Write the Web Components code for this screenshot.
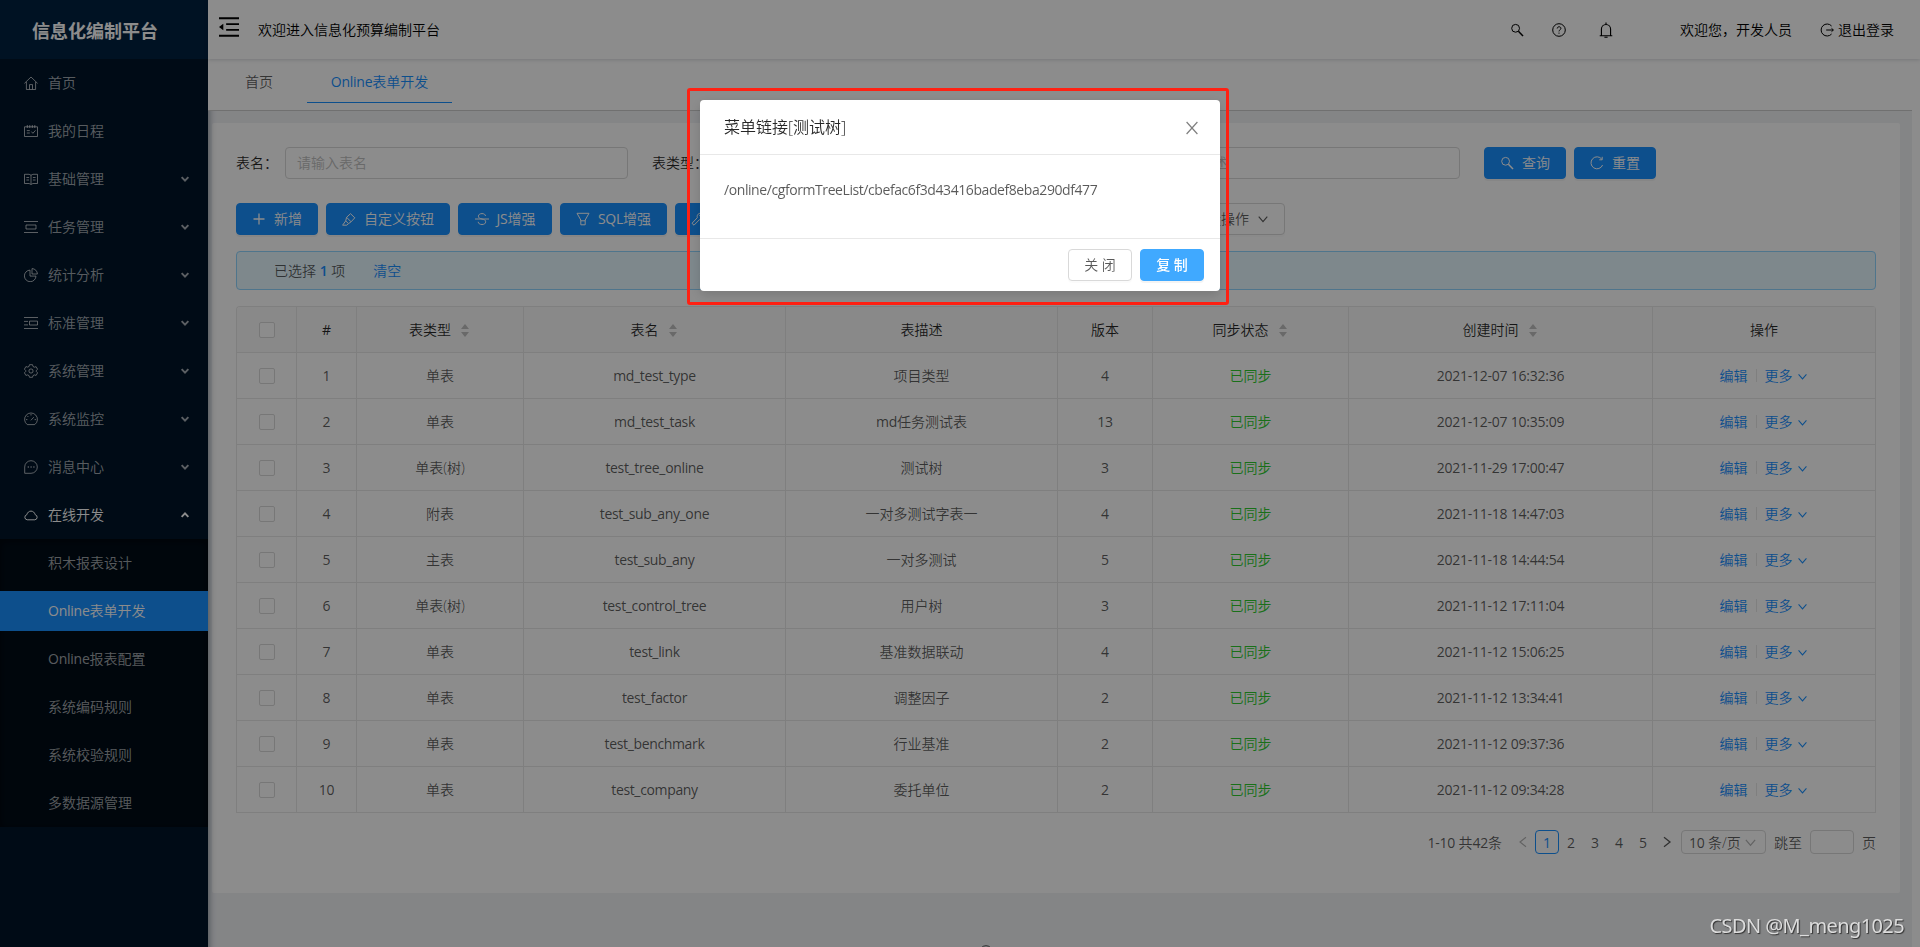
<!DOCTYPE html>
<html lang="zh-CN">
<head>
<meta charset="utf-8">
<title>信息化编制平台</title>
<style>
    html, body {
        margin: 0;
        height: 100%;
        overflow: hidden;
    }

    body {
        font: 350 14px/21px 'Open Sans', 'Noto Sans CJK SC', sans-serif;
        color: rgba(0,0,0,0.65);
        background: white;
    }
</style>
</head>
<body>
<mp-app></mp-app>

<script>
const ICONS = {
    home: '<path d="M.4 7.400 7 1l6.600 6.400M2.400 6v7.500h9.200V6M5.500 13.300V8.600h3v4.700"/>',
    schedule: '<path d="M.5 2.8h13v9.7H.5zM3.3 1v3M5.8 1v3M8.3 1v3M10.8 1v3M2.8 6.6h3M2.8 9h3M7.4 7.6l1.5 1.7 2.6-3"/>',
    read: '<path d="M.5 2.3h4.6L7 3.2l1.9-.9h4.6v9.2H8.9l-1.9 1-1.9-1H.5zM7 3.2v9M2.4 5.5h2.7M2.4 8h2.7M8.9 5.5h2.7M8.9 8h2.7"/>',
    task: '<path d="M0 1.5h14M0 12.5h14M2 5h10v4H2z"/>',
    pie: '<path d="M6 2.1a5.8 5.8 0 1 0 6 6H6zM8 .6V6h5.4A5.5 5.5 0 0 0 8 .6z"/>',
    profile: '<path d="M0 1.5h14M0 12.5h14M0 5.4h4M0 8.9h4M5.5 5.1h8v3.9h-8z"/>',
    setting: '<path d="M5.5.7h3l.5 1.8 1.3.7 1.8-.5 1.5 2.6L12.3 6.500v1l1.300 1.300-1.500 2.600-1.800-.5-1.300.7-.5 1.700h-3L5 11.600l-1.300-.7-1.800.5L.4 8.800 1.700 7.500v-1L.4 5.200l1.500-2.600 1.800.5L5 2.500z"/><circle cx="7" cy="7" r="2.100"/>',
    dashboard: '<path d="M3.300 12.600a6.400 6.400 0 1 1 7.400 0zM6.900 8.300l2.900-3.100M7 2v1.500M2 7.600h1.400M10.600 7.600H12M3.400 4l1 1"/>',
    message: '<path d="M.7 13.300V7a6.300 6.300 0 1 1 6.300 6.300z"/><path d="M3.700 7h1.200M6.500 7h1.200M9.300 7h1.200" stroke-width="1.300"/>',
    cloud: '<path d="M3.200 11.800a2.600 2.600 0 0 1-.4-5.100C3.400 4.500 5 3.100 7 3.100s3.600 1.400 4.200 3.600a2.600 2.600 0 0 1-.4 5.100z"/>',
    search: '<circle cx="5.600" cy="5.300" r="3.900"/><path d="m8.400 8.200 4.600 4.800" stroke-width="1.500"/>',
    question: '<circle cx="7" cy="7" r="6.300"/><path d="M5.200 5.500c0-2.300 3.700-2.300 3.700-.1C8.900 6.900 7 6.700 7 8.400M7 9.600v1.100"/>',
    bell: '<path d="M1.500 12h11M3 12V6.200a4 4 0 0 1 8 0V12M7 .4v1.700M5.600 13.300h2.800"/>',
    logout: '<path d="M11.600 3A6 6 0 1 0 11.600 11M6.200 7h7M11.500 5.300 13.400 7l-1.900 1.700"/>',
    plus: '<path d="M7 1.500v11M1.500 7h11" stroke-width="1.300"/>',
    highlight: '<path d="M.6 13.200h4.200l1.700-1.600-2.800-2.700zM3.700 8.900l.9-3.600L8.500 1.700l4.300 4.100-3.700 4-2.600 1.800M4.600 5.300l4.500 4.500"/>',
    strike: '<path d="M0 7h14M10.500 4c-.2-1.700-1.600-2.400-3.500-2.400-2.200 0-3.600 1-3.600 2.600C3.400 6 5 6.500 7 7c2.200.5 3.700 1 3.700 2.800 0 1.700-1.500 2.700-3.700 2.700-2.300 0-3.700-1-3.800-2.700"/>',
    filter: '<path d="M1 1.300h12L9.200 8v4.800H4.800V8zM4.800 8.800h4.400"/>',
    tool: '<path d="m1 11.300 5.300-5.600c-.7-3 1.500-5 4.500-4.300L8.600 3.700l1.800 1.700 2.300-2.100c.7 2.900-1.400 5-4.300 4.400L3 13.200z"/>',
    reload: '<path d="M11.800 3.200A6 6 0 1 0 12.600 9M12.200.8v3H9.300"/>',
    down: '<path d="m2 4.200 5 5.800 5-5.800" stroke-width="1.300"/>',
    left: '<path d="M10.500 1.500 3.500 7l7 5.500" stroke-width="1.300"/>',
    right: '<path d="m3.500 1.500 7 5.500-7 5.500" stroke-width="1.500"/>',
    close: '<path d="m1.600 1 10.800 12M12.400 1 1.600 13" stroke-width="1.200"/>',
    arrow: '<path d="m2.300 4.300 4.700 5 4.700-5" stroke-width="2.700"/>',
    fold: '<path d="M0 .9h14M5 5h9M5 9h9M0 13.100h14" stroke-width="1.300"/><path d="M0 7l3-2.200v4.400z" fill="currentColor" stroke="none"/>'
};

class Icon extends HTMLElement {
    constructor() {
        super();
        this.attachShadow({mode: 'open'});
        this.shadowRoot.innerHTML = `
            <style>
                :host {
                    display: inline-block;
                    flex: none;
                    width: 14px;
                    height: 14px;
                }

                svg {
                    display: block;
                    width: 100%;
                    height: 100%;
                    fill: none;
                    stroke: currentColor;
                }
            </style>
            <svg viewBox="0 0 14 14">${ICONS[this.getAttribute('name')] || ''}</svg>
        `;
    }
}

// Latin letters and digits are a bit heavier and tighter than the Chinese text
class Latin extends HTMLElement {
    constructor() {
        super();
        this.attachShadow({mode: 'open'});
        // no whitespace around the slot, it would show up inside the text
        this.shadowRoot.innerHTML = `<style>
                :host {
                    display: inline;
                    font-weight: 400;
                    letter-spacing: -0.25px;
                }
            </style><slot></slot>`;
    }
}

function latin(text) {
    return String(text).replace(/[\w][\w\-: ]*/g, '<mp-latin>$&</mp-latin>');
}

class Button extends HTMLElement {
    constructor() {
        super();
        this.attachShadow({mode: 'open'});
        this.shadowRoot.innerHTML = `
            <style>
                :host {
                    display: flex;
                    align-items: center;
                    justify-content: center;
                    gap: 8px;
                    flex: none;
                    box-sizing: border-box;
                    height: 32px;
                    line-height: 20px;
                    border: 1px solid #d9d9d9;
                    border-radius: 4px;
                    background: white;
                    box-shadow: 0 2px 0 rgba(0,0,0,0.015);
                    white-space: nowrap;
                }

                :host([primary]) {
                    color: white;
                    border-color: #1890ff;
                    background: #1890ff;
                    box-shadow: 0 2px 0 rgba(0,0,0,0.045);
                }
            </style>
            <slot></slot>
        `;
    }
}

const MENU = [
    ['home', '首页'], ['schedule', '我的日程'], ['read', '基础管理', 1], ['task', '任务管理', 1],
    ['pie', '统计分析', 1], ['profile', '标准管理', 1], ['setting', '系统管理', 1],
    ['dashboard', '系统监控', 1], ['message', '消息中心', 1], ['cloud', '在线开发', 1]
];
const SUBMENU = ['积木报表设计', 'Online表单开发', 'Online报表配置', '系统编码规则', '系统校验规则', '多数据源管理'];

class Sidebar extends HTMLElement {
    constructor() {
        super();
        this.attachShadow({mode: 'open'});
        this.shadowRoot.innerHTML = `
            <style>
                :host {
                    display: block;
                    background: #001529;
                    box-shadow: 2px 0 6px rgba(0,21,41,0.35);
                    color: rgba(255,255,255,0.65);
                }

                h1 {
                    margin: 0;
                    height: 59px;
                    padding-left: 32px;
                    font-size: 18px;
                    line-height: 63px;
                    color: white;
                    background: #002140;
                    box-sizing: border-box;
                }

                .item {
                    display: flex;
                    align-items: center;
                    height: 40px;
                    line-height: 20px;
                    margin: 4px 0 8px;
                    padding: 0 16px 0 24px;
                }

                .item + .item {
                    margin-top: 0;
                }

                .item span {
                    flex: 1;
                    margin-left: 10px;
                }

                .item mp-icon[name=arrow] {
                    width: 10px;
                    height: 10px;
                    margin-right: 2px;
                }

                .open {
                    color: white;
                    margin-bottom: 4px;
                }

                .open mp-icon[name=arrow] {
                    transform: rotate(180deg);
                }

                .sub {
                    background: #000c17;
                    box-shadow: inset 0 2px 8px rgba(0,0,0,0.45);
                    padding: 4px 0;
                    display: grid;
                    gap: 8px;
                }

                .sub div {
                    height: 40px;
                    line-height: 40px;
                    padding-left: 48px;
                }

                .sub .selected {
                    color: white;
                    background: #1890ff;
                }
            </style>
            <h1>信息化编制平台</h1>
            ${MENU.map(([icon, text, sub]) => `
                <div class="item ${icon === 'cloud' ? 'open' : ''}">
                    <mp-icon name="${icon}"></mp-icon><span>${text}</span>
                    ${sub ? '<mp-icon name="arrow"></mp-icon>' : ''}
                </div>`).join('')}
            <div class="sub">
                ${SUBMENU.map((text, i) => `<div class="${i === 1 ? 'selected' : ''}">${latin(text)}</div>`).join('')}
            </div>
        `;
    }
}

class TopBar extends HTMLElement {
    constructor() {
        super();
        this.attachShadow({mode: 'open'});
        this.shadowRoot.innerHTML = `
            <style>
                :host {
                    display: flex;
                    align-items: center;
                    box-sizing: border-box;
                    height: 59px;
                    padding: 0 26px 0 11px;
                    color: black;
                    background: white;
                    box-shadow: 0 1px 4px rgba(0,21,41,0.16);
                    z-index: 2;
                }

                [name=fold] {
                    width: 20px;
                    height: 20px;
                    margin: -5px 19px 0 0;
                }

                .space {
                    flex: 1;
                }

                [name=bell] {
                    width: 16px;
                    height: 16px;
                    margin: 0 -1px;
                }

                [name=question] { margin: 0 33px 0 28px; }
                [name=logout] { margin: 0 4px 0 28px; }
                .name { margin-left: 67px; }
            </style>
            <mp-icon name="fold"></mp-icon>
            <span>欢迎进入信息化预算编制平台</span>
            <span class="space"></span>
            <mp-icon name="search"></mp-icon>
            <mp-icon name="question"></mp-icon>
            <mp-icon name="bell"></mp-icon>
            <span class="name">欢迎您，开发人员</span>
            <mp-icon name="logout"></mp-icon>
            <span>退出登录</span>
        `;
    }
}

class Tabs extends HTMLElement {
    constructor() {
        super();
        this.attachShadow({mode: 'open'});
        this.shadowRoot.innerHTML = `
            <style>
                :host {
                    display: flex;
                    gap: 10px;
                    box-sizing: border-box;
                    height: 52px;
                    margin-right: 8px;
                    padding-left: 13px;
                    background: white;
                    border-bottom: 1px solid #ccc;
                    z-index: 1;
                }

                div {
                    box-sizing: border-box;
                    width: 76px;
                    height: 44px;
                    line-height: 46px;
                    text-align: center;
                }

                .active {
                    width: 145px;
                    color: #1890ff;
                    border-bottom: 1px solid #1890ff;
                }
            </style>
            <div>首页</div>
            <div class="active">${latin('Online表单开发')}</div>
        `;
    }
}

class SearchForm extends HTMLElement {
    constructor() {
        super();
        this.attachShadow({mode: 'open'});
        this.shadowRoot.innerHTML = `
            <style>
                :host {
                    display: grid;
                    grid-template-columns: 416px 416px 416px 82px 82px;
                    line-height: 20px;
                    color: rgba(0,0,0,0.85);
                }

                .field {
                    display: flex;
                    align-items: center;
                    margin-right: 24px;
                }

                label {
                    margin-right: 7px;
                }

                .input {
                    flex: 1;
                    height: 30px;
                    line-height: 30px;
                    padding: 0 11px;
                    border: 1px solid #d9d9d9;
                    border-radius: 4px;
                    color: #bfbfbf;
                }

                .reset {
                    margin-left: 8px;
                    margin-right: -8px;
                }
            </style>
            <div class="field"><label>表名：</label><div class="input">请输入表名</div></div>
            <div class="field"><label>表类型：</label><div class="input">请选择表类型</div></div>
            <div class="field"><label>表描述：</label><div class="input">请输入表描述</div></div>
            <mp-button primary><mp-icon name="search"></mp-icon>查询</mp-button>
            <mp-button primary class="reset"><mp-icon name="reload"></mp-icon>重置</mp-button>
        `;
    }
}

const COLUMNS = [['表类型', 1], ['表名', 1], ['表描述'], ['版本'], ['同步状态', 1], ['创建时间', 1], ['操作']];
const ROWS = [
    ['单表', 'md_test_type', '项目类型', 4, '2021-12-07 16:32:36'],
    ['单表', 'md_test_task', 'md任务测试表', 13, '2021-12-07 10:35:09'],
    ['单表(树)', 'test_tree_online', '测试树', 3, '2021-11-29 17:00:47'],
    ['附表', 'test_sub_any_one', '一对多测试字表一', 4, '2021-11-18 14:47:03'],
    ['主表', 'test_sub_any', '一对多测试', 5, '2021-11-18 14:44:54'],
    ['单表(树)', 'test_control_tree', '用户树', 3, '2021-11-12 17:11:04'],
    ['单表', 'test_link', '基准数据联动', 4, '2021-11-12 15:06:25'],
    ['单表', 'test_factor', '调整因子', 2, '2021-11-12 13:34:41'],
    ['单表', 'test_benchmark', '行业基准', 2, '2021-11-12 09:37:36'],
    ['单表', 'test_company', '委托单位', 2, '2021-11-12 09:34:28']
];

class Table extends HTMLElement {
    constructor() {
        super();
        this.attachShadow({mode: 'open'});
        this.shadowRoot.innerHTML = `
            <style>
                :host {
                    display: block;
                    border: 1px solid #e8e8e8;
                    border-width: 1px 0 0 1px;
                    border-radius: 4px 4px 0 0;
                    overflow: hidden;
                }

                .row {
                    display: grid;
                    grid-template-columns: 60px 60px 167px 262px 272px 95px 196px 304px 1fr;
                    height: 46px;
                }

                .row > div {
                    display: flex;
                    align-items: center;
                    justify-content: center;
                    border: 1px solid #e8e8e8;
                    border-width: 0 1px 1px 0;
                }

                .head {
                    background: #fafafa;
                    color: rgba(0,0,0,0.85);
                }

                .check {
                    box-sizing: border-box;
                    width: 16px;
                    height: 16px;
                    border: 1px solid #d9d9d9;
                    border-radius: 2px;
                    background: white;
                }

                .sorter {
                    display: grid;
                    gap: 3px;
                    margin: 2px 2px 0 10px;
                }

                .sorter::before,
                .sorter::after {
                    content: '';
                    border: solid transparent;
                    border-width: 0 4px 5px;
                    border-bottom-color: #bfbfbf;
                }

                .sorter::after {
                    transform: rotate(180deg);
                }

                .name mp-latin {
                    letter-spacing: -0.35px;
                }

                .synced {
                    color: #2ecc2e;
                }

                a {
                    color: #1890ff;
                }

                a mp-icon {
                    width: 11px;
                    height: 11px;
                    margin: 0 1px -1px 4px;
                }

                i {
                    width: 1px;
                    height: 13px;
                    margin: 0 8px;
                    background: #e8e8e8;
                }
            </style>
            <div class="row head">
                <div><span class="check"></span></div>
                <div><mp-latin>#</mp-latin></div>
                ${COLUMNS.map(([text, sort]) => `<div>${text}${sort ? '<span class="sorter"></span>' : ''}</div>`).join('')}
            </div>
            ${ROWS.map(([type, name, desc, version, time], i) => `
                <div class="row">
                    <div><span class="check"></span></div>
                    <div>${latin(i + 1)}</div>
                    <div>${type}</div>
                    <div class="name">${latin(name)}</div>
                    <div>${latin(desc)}</div>
                    <div>${latin(version)}</div>
                    <div class="synced">已同步</div>
                    <div>${latin(time)}</div>
                    <div><a>编辑</a><i></i><a>更多<mp-icon name="down"></mp-icon></a></div>
                </div>`).join('')}
        `;
    }
}

class Pagination extends HTMLElement {
    constructor() {
        super();
        this.attachShadow({mode: 'open'});
        this.shadowRoot.innerHTML = `
            <style>
                :host {
                    display: flex;
                    align-items: center;
                    justify-content: flex-end;
                    height: 24px;
                }

                .total {
                    margin-right: 9px;
                }

                .page {
                    display: flex;
                    align-items: center;
                    justify-content: center;
                    box-sizing: border-box;
                    width: 24px;
                    height: 24px;
                }

                .page mp-icon {
                    width: 12px;
                    height: 12px;
                }

                .disabled {
                    color: rgba(0,0,0,0.3);
                }

                .active {
                    color: #1890ff;
                    border: 1px solid #1890ff;
                    border-radius: 4px;
                }

                .size,
                .jump {
                    box-sizing: border-box;
                    height: 24px;
                    border: 1px solid #d9d9d9;
                    border-radius: 4px;
                }

                .size {
                    display: flex;
                    align-items: center;
                    justify-content: space-between;
                    width: 85px;
                    margin: 0 8px 0 2px;
                    padding: 0 8px 0 7px;
                    white-space: nowrap;
                }

                .size mp-icon {
                    width: 13px;
                    height: 13px;
                    color: rgba(0,0,0,0.3);
                }

                .jump {
                    width: 44px;
                    margin: 0 8px;
                }
            </style>
            <span class="total">${latin('1-10 共42条')}</span>
            <span class="page disabled"><mp-icon name="left"></mp-icon></span>
            <span class="page active">${latin(1)}</span>
            ${[2, 3, 4, 5].map(n => `<span class="page">${latin(n)}</span>`).join('')}
            <span class="page"><mp-icon name="right"></mp-icon></span>
            <span class="size"><span>${latin('10 条/页')}</span><mp-icon name="down"></mp-icon></span>
            <span>跳至</span>
            <span class="jump"></span>
            <span>页</span>
        `;
    }
}

class Modal extends HTMLElement {
    constructor() {
        super();
        this.attachShadow({mode: 'open'});
        this.shadowRoot.innerHTML = `
            <style>
                #backdrop {
                    position: fixed;
                    inset: 0;
                    background: rgba(0,0,0,0.45);
                    z-index: 10;
                }

                #modal {
                    position: fixed;
                    top: 100px;
                    left: 700px;
                    width: 520px;
                    height: 191px;
                    display: grid;
                    grid-template-rows: 55px 1fr 53px;
                    background: white;
                    border-radius: 4px;
                    box-shadow: 0 4px 12px rgba(0,0,0,0.15);
                    z-index: 20;
                }

                #frame {
                    position: fixed;
                    top: 88px;
                    left: 687px;
                    width: 536px;
                    height: 211px;
                    border: 3px solid #ff2113;
                    border-radius: 3px;
                    z-index: 15;
                }

                header {
                    display: flex;
                    align-items: center;
                    justify-content: space-between;
                    box-sizing: border-box;
                    padding: 1px 21px 0 24px;
                    border-bottom: 1px solid #e8e8e8;
                    font-size: 16px;
                    color: rgba(0,0,0,0.85);
                }

                header mp-icon {
                    color: rgba(0,0,0,0.5);
                }

                #main {
                    padding: 24px;
                    font-weight: 400;
                    letter-spacing: -0.42px;
                }

                footer {
                    display: flex;
                    align-items: center;
                    justify-content: flex-end;
                    gap: 8px;
                    padding-right: 16px;
                    border-top: 1px solid #e8e8e8;
                }

                footer mp-button {
                    width: 64px;
                }

                footer mp-button[primary] {
                    font-weight: 500;
                    border-color: #40a9ff;
                    background: #40a9ff;
                }
            </style>
            <div id="backdrop"></div>
            <div id="frame"></div>
            <div id="modal">
                <header>
                    <slot name="title"></slot>
                    <mp-icon name="close"></mp-icon>
                </header>
                <section id="main">
                    <slot></slot>
                </section>
                <footer>
                    <mp-button>关 闭</mp-button>
                    <mp-button primary>复 制</mp-button>
                </footer>
            </div>
        `;
    }
}

class App extends HTMLElement {
    constructor() {
        super();
        this.attachShadow({mode: 'open'});
        this.shadowRoot.innerHTML = `
            <style>
                :host {
                    display: grid;
                    grid-template-columns: 208px 1fr;
                    height: 100vh;
                    overflow: hidden;
                }

                mp-sidebar {
                    z-index: 1;
                }

                .layout {
                    display: grid;
                    grid-template-rows: 59px 52px 1fr;
                    min-width: 0;
                }

                mp-topbar,
                mp-tabs {
                    position: relative;
                }

                .content {
                    margin-right: 8px;
                    padding: 12px 12px 0 4px;
                    background: #f0f2f5;
                }

                .card {
                    height: 770px;
                    box-sizing: border-box;
                    padding: 24px;
                    background: white;
                    border-radius: 2px;
                }

                .actions {
                    display: flex;
                    gap: 8px;
                    margin: 24px 0 16px;
                }

                .actions mp-latin {
                    margin-right: -8px;
                }

                .batch {
                    width: 108px;
                    margin-left: 387px;
                }

                .batch mp-icon {
                    width: 12px;
                    height: 12px;
                }

                .alert {
                    display: flex;
                    align-items: center;
                    height: 37px;
                    margin-bottom: 16px;
                    padding-left: 37px;
                    background: #e6f7ff;
                    border: 1px solid #91d5ff;
                    border-radius: 4px;
                }

                .alert a {
                    color: #1890ff;
                    margin-left: 28px;
                }

                .alert b {
                    color: #1890ff;
                    font-weight: 600;
                }

                mp-pagination {
                    margin-top: 17px;
                }

                .footer {
                    display: flex;
                    margin: 52px 0 0 767px;
                }

                .watermark {
                    position: fixed;
                    right: 16px;
                    bottom: 7px;
                    font: 20px/28px 'Noto Sans', sans-serif;
                    letter-spacing: -0.6px;
                    color: #dcdcdc;
                    text-shadow: 1px 1px 1px #333;
                    z-index: 30;
                }
            </style>
            <mp-sidebar></mp-sidebar>
            <div class="layout">
                <mp-topbar></mp-topbar>
                <mp-tabs></mp-tabs>
                <div class="content">
                    <div class="card">
                        <mp-search-form></mp-search-form>
                        <div class="actions">
                            <mp-button primary style="width:82px"><mp-icon name="plus"></mp-icon>新增</mp-button>
                            <mp-button primary style="width:124px"><mp-icon name="highlight"></mp-icon>自定义按钮</mp-button>
                            <mp-button primary style="width:94px"><mp-icon name="strike"></mp-icon>${latin('JS')}增强</mp-button>
                            <mp-button primary style="width:107px"><mp-icon name="filter"></mp-icon>${latin('SQL')}增强</mp-button>
                            <mp-button primary style="width:107px"><mp-icon name="tool"></mp-icon>${latin('Java')}增强</mp-button>
                            <mp-button class="batch">批量操作<mp-icon name="down"></mp-icon></mp-button>
                        </div>
                        <div class="alert"><span>已选择 <b>1</b> 项</span><a>清空</a></div>
                        <mp-table></mp-table>
                        <mp-pagination></mp-pagination>
                    </div>
                    <div class="footer"><mp-icon name="question"></mp-icon></div>
                </div>
            </div>
            <mp-modal>
                <span slot="title">菜单链接[测试树]</span>
                /online/cgformTreeList/cbefac6f3d43416badef8eba290df477
            </mp-modal>
            <div class="watermark">CSDN @M_meng1025</div>
        `;
    }
}

customElements.define('mp-icon', Icon);
customElements.define('mp-latin', Latin);
customElements.define('mp-button', Button);
customElements.define('mp-sidebar', Sidebar);
customElements.define('mp-topbar', TopBar);
customElements.define('mp-tabs', Tabs);
customElements.define('mp-search-form', SearchForm);
customElements.define('mp-table', Table);
customElements.define('mp-pagination', Pagination);
customElements.define('mp-modal', Modal);
customElements.define('mp-app', App);
</script>
</body>
</html>
